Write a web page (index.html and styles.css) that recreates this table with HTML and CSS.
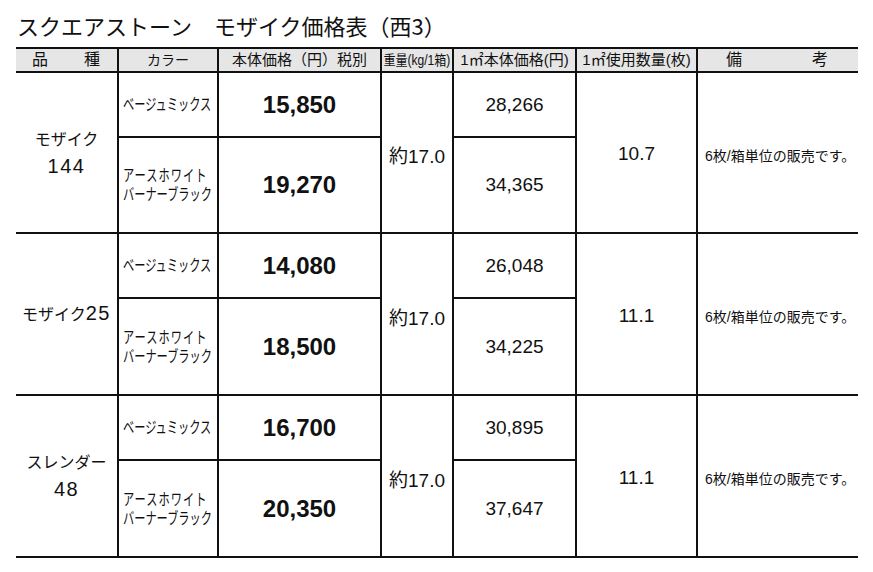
FILE: index.html
```html
<!DOCTYPE html>
<html lang="ja">
<head>
<meta charset="utf-8">
<title>スクエアストーン モザイク価格表（西3）</title>
<link rel="stylesheet" href="styles.css">
</head>
<body>
<div class="page">
  <h1 class="title">スクエアストーン　モザイク価格表（西3）</h1>
  <div class="table">
    <div class="cell head h-name"><span>品</span><span>種</span></div>
    <div class="cell head h-color">カラー</div>
    <div class="cell head">本体価格（円）税別</div>
    <div class="cell head"><span class="squeeze">重量(kg/1箱)</span></div>
    <div class="cell head">1㎡本体価格(円)</div>
    <div class="cell head">1㎡使用数量(枚)</div>
    <div class="cell head h-note last"><span>備</span><span>考</span></div>

    <div class="cell name span2"><span>モザイク</span><span class="num">144</span></div>
    <div class="cell color"><span class="cond">ベージュミックス</span></div>
    <div class="cell price">15,850</div>
    <div class="cell weight span2">約17.0</div>
    <div class="cell m2">28,266</div>
    <div class="cell qty span2">10.7</div>
    <div class="cell note span2 last">6枚/箱単位の販売です。</div>
    <div class="cell color"><span class="cond"><span class="wide">アースホワイト</span><br>バーナーブラック</span></div>
    <div class="cell price">19,270</div>
    <div class="cell m2">34,365</div>

    <div class="cell name span2"><span>モザイク<span class="num">25</span></span></div>
    <div class="cell color"><span class="cond">ベージュミックス</span></div>
    <div class="cell price">14,080</div>
    <div class="cell weight span2">約17.0</div>
    <div class="cell m2">26,048</div>
    <div class="cell qty span2">11.1</div>
    <div class="cell note span2 last">6枚/箱単位の販売です。</div>
    <div class="cell color"><span class="cond"><span class="wide">アースホワイト</span><br>バーナーブラック</span></div>
    <div class="cell price">18,500</div>
    <div class="cell m2">34,225</div>

    <div class="cell name span2"><span>スレンダー</span><span class="num">48</span></div>
    <div class="cell color"><span class="cond">ベージュミックス</span></div>
    <div class="cell price">16,700</div>
    <div class="cell weight span2">約17.0</div>
    <div class="cell m2">30,895</div>
    <div class="cell qty span2">11.1</div>
    <div class="cell note span2 last">6枚/箱単位の販売です。</div>
    <div class="cell color"><span class="cond"><span class="wide">アースホワイト</span><br>バーナーブラック</span></div>
    <div class="cell price">20,350</div>
    <div class="cell m2">37,647</div>
  </div>
</div>
</body>
</html>
```

FILE: styles.css
```css
html, body {
  margin: 0;
  background: #ffffff;
}

body {
  color: #111111;
  font-family: "Liberation Sans", "Noto Sans CJK JP", sans-serif;
}

.page {
  padding: 13px 0 0 16px;
}

.title {
  margin: 0 0 10px 1px;
  font-family: "Noto Sans CJK JP", sans-serif;
  font-weight: 400;
  font-size: 22px;
  line-height: 24px;
}

.table {
  display: grid;
  grid-template-columns: 103px 100px 163px 72px 123px 121px 160px;
  grid-template-rows: 26px 65px 96px 65px 97px 65px 97px;
  width: 842px;
}

.cell {
  box-sizing: border-box;
  display: flex;
  align-items: center;
  justify-content: center;
  border-right: 2px solid #111111;
  border-bottom: 2px solid #111111;
  white-space: nowrap;
}

.cell.last {
  border-right: none;
}

.span2 {
  grid-row: span 2;
}

.head {
  border-top: 2px solid #111111;
  background: #e6e6e6;
  font-size: 15px;
  line-height: 20px;
}

.h-name {
  justify-content: space-between;
  padding: 0 17px 0 16px;
  font-size: 16px;
}

.h-color {
  font-size: 14px;
}

.h-note {
  justify-content: space-between;
  padding: 0 30px 0 28px;
  font-size: 16px;
}

.squeeze {
  display: inline-block;
  font-size: 14px;
  transform: scaleX(0.86);
}

.name {
  flex-direction: column;
  font-size: 16px;
  line-height: 27px;
  text-align: center;
}

.num {
  font-size: 20px;
  letter-spacing: 1.5px;
}

.color {
  justify-content: flex-start;
  padding-left: 4px;
  font-size: 16px;
  line-height: 19px;
}

.cond {
  display: inline-block;
  transform: scaleX(0.7);
  transform-origin: left center;
}

.wide {
  letter-spacing: 1.5px;
}

.price {
  font-size: 24px;
  font-weight: 700;
}

.weight {
  font-size: 19px;
  padding-top: 4px;
}

.m2 {
  font-size: 19px;
}

.qty {
  font-size: 19px;
  padding-top: 3px;
}

.note {
  justify-content: flex-start;
  padding: 4px 0 0 7px;
  font-size: 14px;
}
```
